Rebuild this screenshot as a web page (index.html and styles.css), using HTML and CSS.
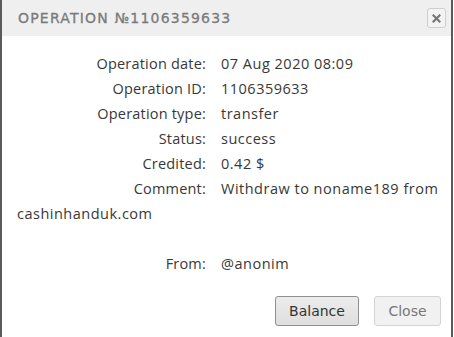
FILE: index.html
```html
<!DOCTYPE html>
<html>
<head>
<meta charset="utf-8">
<link rel="stylesheet" href="styles.css">
</head>
<body>
<div class="dialog">
  <div class="header">
    <span class="title">OPERATION №1106359633</span>
    <button class="x-btn" aria-label="close">
      <svg width="9" height="9" viewBox="0 0 9 9"><path d="M1.5 1.5L7.5 7.5M7.5 1.5L1.5 7.5" stroke="#777" stroke-width="2.2" stroke-linecap="square"/></svg>
    </button>
  </div>
  <div class="content">
    <div class="row"><span class="label">Operation date:</span><span class="value">07 Aug 2020 08:09</span></div>
    <div class="row"><span class="label">Operation ID:</span><span class="value">1106359633</span></div>
    <div class="row"><span class="label">Operation type:</span><span class="value">transfer</span></div>
    <div class="row"><span class="label">Status:</span><span class="value">success</span></div>
    <div class="row"><span class="label">Credited:</span><span class="value">0.42 $</span></div>
    <div class="row"><span class="label">Comment:</span><span class="value">Withdraw to noname189 from cashinhanduk.com</span></div>
    <div class="row gap"><span class="label">From:</span><span class="value">@anonim</span></div>
  </div>
  <div class="footer">
    <button class="btn primary">Balance</button>
    <button class="btn muted">Close</button>
  </div>
</div>
</body>
</html>
```
FILE: styles.css
```css
html, body {
  margin: 0;
  padding: 0;
  background: #fff;
}
.dialog {
  width: 449px;
  height: 337px;
  border-left: 2px solid #5a5a5a;
  border-right: 2px solid #5a5a5a;
  display: flex;
  flex-direction: column;
  font-family: "Open Sans", "Liberation Sans", sans-serif;
}
.header {
  height: 36px;
  background: #efefef;
  display: flex;
  align-items: center;
  justify-content: space-between;
  padding: 0 5px 0 16px;
}
.title {
  font-family: "DejaVu Sans", sans-serif;
  font-size: 14px;
  letter-spacing: 1.2px;
  color: #7a7a7a;
  font-weight: normal;
  -webkit-text-stroke: 0.3px #7a7a7a;
}
.x-btn {
  width: 19px;
  height: 20px;
  padding: 0;
  border: 1px solid #cfcfcf;
  border-radius: 3px;
  background: #f3f3f3;
  display: flex;
  align-items: center;
  justify-content: center;
}
.content {
  padding: 15px 2px 0 15px;
  font-size: 14.5px;
  color: #383838;
  line-height: 25px;
}
.label {
  display: inline-block;
  width: 189px;
  padding-right: 15px;
  text-align: right;
  letter-spacing: 0.2px;
}
.value {
  letter-spacing: 0.5px;
}
.row.gap {
  margin-top: 25px;
}
.footer {
  display: flex;
  justify-content: flex-end;
  gap: 15px;
  padding: 20px 10px 0 0;
}
.btn {
  height: 30px;
  font-family: "DejaVu Sans", sans-serif;
  font-size: 14px;
  border-radius: 3px;
  padding: 0;
}
.primary {
  width: 84px;
  color: #333;
  border: 1px solid #8f8f8f;
  background: linear-gradient(#ececec, #dedede);
}
.muted {
  width: 67px;
  color: #777;
  border: 1px solid #d4d4d4;
  background: #f1f1f1;
}
```
